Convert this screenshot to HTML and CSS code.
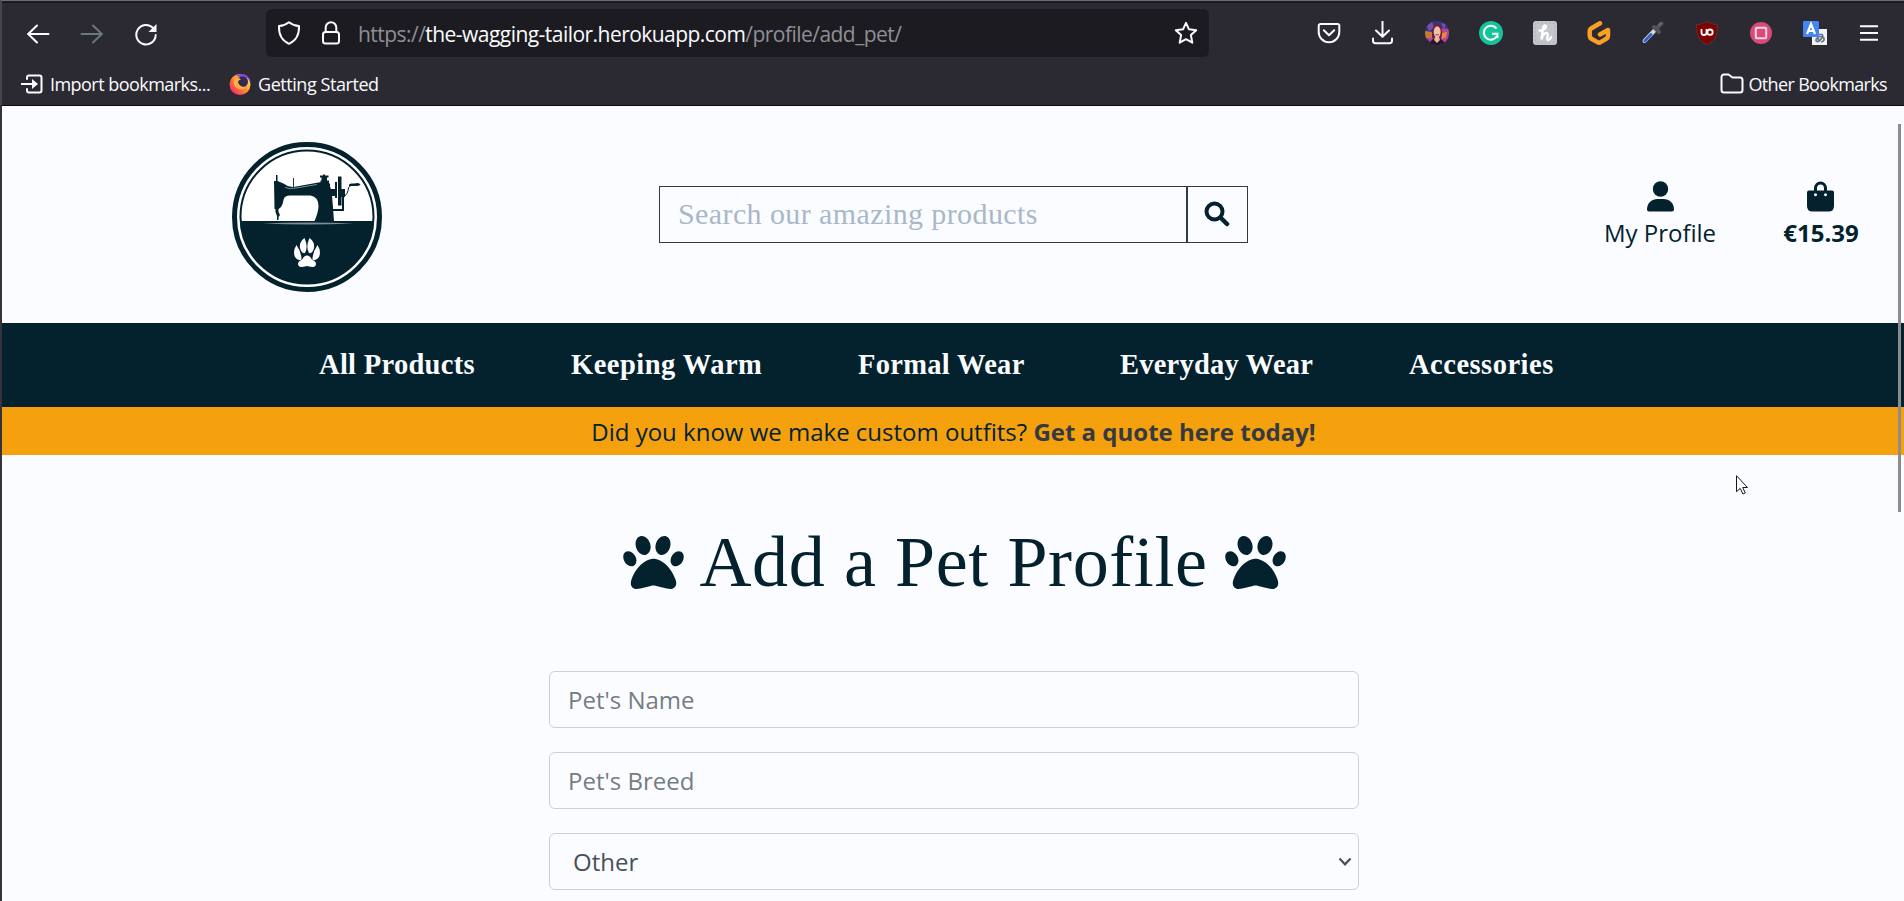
FILE: index.html
```html
<!DOCTYPE html>
<html lang="en">
<head>
<meta charset="utf-8">
<title>The Wagging Tailor</title>
<link rel="stylesheet" href="styles.css">
</head>
<body>
<svg class="defs" width="0" height="0">
  <symbol id="paw" viewBox="0 32 512 448"><path d="M226.5 92.9c14.3 42.9-.3 86.2-32.6 96.8s-70.1-15.6-84.4-58.5s.3-86.2 32.6-96.8s70.1 15.6 84.4 58.5zM100.4 198.6c18.9 32.4 14.3 70.1-10.2 84.1s-59.7-.9-78.5-33.3S-2.7 179.3 21.8 165.3s59.7 .9 78.5 33.3zM69.2 401.2C121.6 259.9 214.7 224 256 224s134.4 35.9 186.8 177.2c3.6 9.7 5.2 20.1 5.2 30.5v1.6c0 25.8-20.9 46.7-46.7 46.7c-11.5 0-22.9-1.4-34-4.2l-88-22c-15.3-3.8-31.3-3.8-46.6 0l-88 22c-11.1 2.8-22.5 4.2-34 4.2C84.9 480 64 459.1 64 433.3v-1.6c0-10.4 1.6-20.8 5.2-30.5zM421.8 282.7c-24.5-14-29.1-51.7-10.2-84.1s54-47.3 78.5-33.3s29.1 51.7 10.2 84.1s-54 47.3-78.5 33.3zM310.1 189.7c-32.3-10.6-46.9-53.9-32.6-96.8s52.1-69.1 84.4-58.5s46.9 53.9 32.6 96.8s-52.1 69.1-84.4 58.5z"/></symbol>
</svg>

<div class="browser">
  <div class="toolbar">
    <div class="nav-buttons">
      <svg class="ic" width="24" height="24" viewBox="0 0 24 24"><path d="M22.5 12H2M11 3.5L2.200 12l8.800 8.500"/></svg>
      <svg class="ic dim" width="24" height="24" viewBox="0 0 24 24"><path d="M1.500 12H22M13 3.500l8.800 8.500-8.800 8.500"/></svg>
      <svg class="ic" width="24" height="24" viewBox="0 0 24 24"><path d="M19.200 6.200A9.700 9.700 0 1 0 21.700 13"/><path d="M22.500 2v8h-8z" fill="#fbfbfe" stroke="none"/></svg>
    </div>
    <div class="urlbar">
      <svg class="ic" width="24" height="26" viewBox="0 0 24 26"><path d="M12 2.200c3 2.400 6.500 3.600 10 3.900.3 7-1.500 13.800-10 17.700C3.500 19.900 1.700 13.100 2 6.100c3.500-.3 7-1.500 10-3.900z"/></svg>
      <svg class="ic lock" width="20" height="26" viewBox="0 0 20 26"><rect x="2" y="12" width="16" height="11.500" rx="2.500"/><path d="M4.700 12V7.500a5.300 5.300 0 0 1 10.600 0V12"/></svg>
      <span class="url">https://<b>the-wagging-tailor.herokuapp.com</b>/profile/add_pet/</span>
      <svg class="ic star" width="24" height="24" viewBox="0 0 24 24"><path d="M12 1.800l3 6.500 7.200.9-5.300 4.900 1.400 7.600L12 18.200l-6.300 3.500 1.400-7.600L1.800 9.200 9 8.300z"/></svg>
    </div>
    <div class="extensions">
      <svg class="ic" width="24" height="24" viewBox="0 0 24 24"><path d="M3.500 3h17a1.800 1.800 0 0 1 1.800 1.800V11a10.300 10.300 0 0 1-20.600 0V4.800A1.800 1.800 0 0 1 3.500 3z"/><path d="M6.800 9.300L12 14.300l5.200-5"/></svg>
      <svg class="ic" width="24" height="24" viewBox="0 0 24 24"><path d="M11.500 0v15.500M5 9.500l6.500 6.300L18 9.500M2 17.500v2.300a2.400 2.400 0 0 0 2.400 2.400h14.200a2.400 2.400 0 0 0 2.400-2.400v-2.300"/></svg>
      <svg width="24" height="24" viewBox="0 0 24 24"><defs><clipPath id="av"><circle cx="12" cy="12" r="12"/></clipPath></defs><g clip-path="url(#av)"><path fill="#41307e" d="M0 0h24v24H0z"/><path fill="#c77a38" d="M0 10l7 1v7l-7-1z"/><path fill="#b7429c" d="M15 7l9 1v13l-9 3zM1 17l7 0v6z"/><path fill="#7351b5" d="M1 3l6-3 2 7-5 3zM16 2l5 1-2 5z"/><path fill="#e58a32" d="M17 12l5-1-1 5-4 2z"/><path fill="#6e2029" d="M7.500 13C6 0 18 0 17 13l-2 7H9z"/><ellipse cx="12.200" cy="11" rx="3.500" ry="5.700" fill="#eec1ab"/><path fill="#26152c" d="M4 24c2-6 5-7 8-7s7 2 8 7z"/><path fill="#e9b69e" d="M10 16h4l1 3-3 3-3-3z"/><path stroke="#a02e3c" fill="none" d="M10.500 13.500q1.700 1 3.400 0"/></g></svg>
      <svg width="24" height="24" viewBox="0 0 24 24"><circle cx="12" cy="12" r="12" fill="#15c39a"/><path d="M17.500 7.500A7 7 0 1 0 18 15" fill="none" stroke="#fff" stroke-width="2"/><path d="M13 12.800h5.500V17" fill="none" stroke="#fff" stroke-width="2"/></svg>
      <svg width="24" height="24" viewBox="0 0 24 24"><rect width="24" height="24" rx="3" fill="#c3c6ca"/><rect x="2" y="2" width="20" height="20" rx="2" fill="none" stroke="#aeb2b7" stroke-dasharray="2 2"/><path d="M6.500 9.500c4 .5 8-3 6-5-3-1-3 7-4 14 1-4.500 3-6.500 5-6.500 3 0-1 6.500 1.500 7 1.500 0 2.500-1.500 3-3" fill="none" stroke="#fff" stroke-width="2.300" stroke-linecap="round"/></svg>
      <svg width="24" height="24" viewBox="0 0 24 24"><path d="M13 2.300L4.500 7.200q-1.800 1-1.800 3v4.500q0 2 1.700 3l6 3.400q1.600 1 3.200 0l5.700-3.300q1.700-1 1.700-3V9l-8 4.500" fill="none" stroke="#fa9f25" stroke-width="4.500" stroke-linejoin="round" stroke-linecap="round"/></svg>
      <svg width="24" height="24" viewBox="0 0 24 24"><path d="M3.500 20L13.500 9.500" stroke="#d0d4dc" stroke-width="4" stroke-linecap="round"/><path d="M3.800 20L10 13.500" stroke="#3460cc" stroke-width="2.800" stroke-linecap="round"/><path d="M13 6l5 5M15 8l5.500-5.500" stroke="#505457" stroke-width="4" stroke-linecap="round"/><path d="M18 4l2-2" stroke="#777" stroke-width="1.500"/></svg>
      <svg width="24" height="24" viewBox="0 0 24 24"><path d="M12 .5C15 2.500 18.500 3.500 22.300 3.500 23 14 20 20 12 23.500 4 20 1 14 1.700 3.500 5.500 3.500 9 2.500 12 .5z" fill="#800000" stroke="#5e3038"/><path d="M6.500 8v3.500a2.500 2.500 0 0 0 5 0V8" fill="none" stroke="#fff" stroke-width="1.800"/><circle cx="15" cy="11.200" r="2.700" fill="none" stroke="#fff" stroke-width="1.800"/></svg>
      <svg width="24" height="24" viewBox="0 0 24 24"><circle cx="12" cy="12" r="11" fill="#d84a7c"/><rect x="6.800" y="6.800" width="10.400" height="10.400" rx="1" fill="none" stroke="#f5d5df" stroke-width="2"/></svg>
      <svg width="24" height="24" viewBox="0 0 24 24"><path fill="#f3f3f3" d="M9 8h15v16H9z"/><path d="M12 13.500h8M15 11c-.500 4-.2 7 1 10M20 14c-1 4-4 7-6 6.500-2.500-1 0-5 3.500-5 5 0 4.500 5 .5 5.500" fill="none" stroke="#60788a" stroke-width="1.700"/><rect width="16" height="16" rx="1" fill="#4285f4"/><path d="M4 13L8 3l4 10M5.500 10h5" fill="none" stroke="#fff" stroke-width="2.200"/></svg>
      <svg class="ic" width="24" height="24" viewBox="0 0 24 24"><path d="M3 5.200h18M3 12h18M3 18.800h18" stroke-linecap="butt"/></svg>
    </div>
  </div>
  <div class="bookmarks">
    <svg class="ic" width="22" height="20" viewBox="0 0 22 20"><path d="M6 5V3.500A2 2 0 0 1 8 1.500h10.500a2 2 0 0 1 2 2v13a2 2 0 0 1-2 2H8a2 2 0 0 1-2-2V15M0 10h13"/><path d="M11 5l6 5-6 5z" fill="#fbfbfe" stroke="none"/></svg>
    <span class="bm bm-import">Import bookmarks...</span>
    <svg class="fox" width="22" height="22" viewBox="0 0 22 22"><defs><linearGradient id="fx" x1="1" y1="0" x2="0" y2="1"><stop offset=".15" stop-color="#ffe14a"/><stop offset=".5" stop-color="#ff8a36"/><stop offset=".85" stop-color="#f43160"/></linearGradient></defs><circle cx="11" cy="11.500" r="10.500" fill="url(#fx)"/><path d="M7 3C14-2 22 3 21.500 10 20 5 16 3 12 4z" fill="#8e3df2"/><circle cx="13.500" cy="8.700" r="5.500" fill="#302a55"/><path d="M5 6q4-2 7 .5-3 .5-3 3 2 5 8.500 4.500-4 4-9 1.500Q3 12 5 6z" fill="#ffb03a"/></svg>
    <span class="bm bm-start">Getting Started</span>
    <svg class="ic folder" width="24" height="21" viewBox="0 0 24 21"><path d="M1.500 4A2.500 2.500 0 0 1 4 1.500h4.500l4 3H20A2.500 2.500 0 0 1 22.500 7v10a2.500 2.500 0 0 1-2.500 2.500H4A2.500 2.500 0 0 1 1.500 17z"/></svg>
    <span class="bm bm-other">Other Bookmarks</span>
  </div>
</div>

<div class="page">
  <header class="header">
    <svg class="logo" width="150" height="150" viewBox="0 0 150 150">
      <circle cx="75" cy="75" r="72.500" fill="#fff" stroke="#04222d" stroke-width="5"/>
      <circle cx="75" cy="75" r="66.500" fill="#fff" stroke="#04222d" stroke-width="2"/>
      <path fill="#04222d" d="M8.600 79h132.800a66.500 66.500 0 0 1-132.800 0z"/>
      <path d="M30 81.500q45-2 92 0-46 2-92 0z" fill="#7c8d93"/>
      <g fill="#04222d">
        <path d="M42 39h2v-6h1.500v6l6 2.500q5 4 10 3.500l25-4.500q8-1.500 11 2l1.500 5h5V53h-4l2 26H82.500q4-9 4-15 0-9-8-10.500H58q-6 0-6.500 4.500-1 7-5 9h-4z"/>
        <path d="M43.500 66h3v4l1.500 3-1.500 2v3h-1.500v-4l-1.500-4z"/>
        <path d="M61 36h.900v9H61zM88 33.500h3v-1h2v1h3.500v2H95v3h2v3h1v3H86.500v-3h2v-3h1v-3H88zM98 47h5v-7h2v16h-2v-2h-5zM106 34.500h3.500v29H106zM109 47h4v8h-1v14H100v-2h10V55h-1z"/>
      </g>
      <path d="M112.500 54q3.500-2 4-8.500l2-1.500" fill="none" stroke="#04222d"/>
      <path d="M117 42.500l2-1h3.500q4.500-1.500 6 1-1.500 2-6 1.500H117z" fill="#04222d"/>
      <path d="M53 45.500q5 2 11 .5l21-3.500" stroke="#a9b8bc" stroke-width=".7" fill="none"/>
      <g fill="#fff"><path d="M75 113.500q3 0 4.500 3.500l4 3q1.500 4-2 5-3 0-6.500-1-3.500 1-6.500 1-3.500-1-2-5l4-3q1.500-3.500 4.500-3.500z"/><path d="M72.500 96q-5.500 4-4.500 10 1.500 6 5 5 3.500-6-.500-15zM77.500 96q5.500 4 4.500 10-1.500 6-5 5-3.500-6 .5-15zM64.500 103q-4 6-1.500 12 3.500 5 6.500 2.500 0-7-5-14.500zM85.500 103q4 6 1.500 12-3.500 5-6.500 2.500 0-7 5-14.500z"/></g>
    </svg>
    <form class="search">
      <span class="search-text">Search our amazing products</span>
      <span class="search-btn"><svg width="26" height="26" viewBox="0 0 26 26"><circle cx="10.500" cy="10.500" r="8" fill="none" stroke="#04222d" stroke-width="4"/><path d="M16.500 16.500l6.500 6.500" stroke="#04222d" stroke-width="4.500" stroke-linecap="round"/></svg></span>
    </form>
    <a class="tool profile">
      <svg width="27" height="31" viewBox="0 0 27 31"><circle cx="13.500" cy="8" r="7.700"/><path d="M0 28.500C0 22 5 18 10.500 18h6C22 18 27 22 27 28.500a2 2 0 0 1-2 2H2a2 2 0 0 1-2-2z"/></svg>
      <span>My Profile</span>
    </a>
    <a class="tool bag">
      <svg width="27" height="31" viewBox="0 0 27 31"><path d="M8.500 12V7.500a5 5.500 0 0 1 10 0V12" fill="none" stroke="#04222d" stroke-width="3"/><path fill-rule="evenodd" d="M2 9.500h23q2 0 2 2V25q0 5.500-5.500 5.500h-16Q0 30.500 0 25V11.500q0-2 2-2zm6.500 2.700a1.500 1.500 0 1 0 .01 0zm10 0a1.500 1.500 0 1 0 .01 0z"/></svg>
      <span>€15.39</span>
    </a>
  </header>

  <nav class="menu">
    <a class="m1">All Products</a>
    <a class="m2">Keeping Warm</a>
    <a class="m3">Formal Wear</a>
    <a class="m4">Everyday Wear</a>
    <a class="m5">Accessories</a>
  </nav>

  <div class="banner"><span>Did you know we make custom outfits? <b>Get a quote here today!</b></span></div>

  <main class="content">
    <h1 class="title"><svg width="61" height="53"><use href="#paw"/></svg><span>Add a Pet Profile</span><svg width="61" height="53"><use href="#paw"/></svg></h1>
    <div class="fields">
      <div class="field">Pet's Name</div>
      <div class="field">Pet's Breed</div>
      <div class="field select"><span>Other</span><svg width="14" height="10" viewBox="0 0 14 10"><path d="M1.500 1.500L7 7.300l5.500-5.800" fill="none" stroke="#495057" stroke-width="2.200"/></svg></div>
    </div>
  </main>
</div>

<div class="scrollbar"></div>
<svg class="cursor" width="14" height="21" viewBox="0 0 14 21"><path d="M.5.700v16l3.700-3.300 2.800 5.600 2.300-1.100-2.600-5.400h4.800z" fill="#fff" stroke="#15171c"/></svg>
</body>
</html>
```
FILE: styles.css
```css
* { box-sizing: border-box; }
body {
  margin: 0;
  width: 1904px;
  height: 901px;
  overflow: hidden;
  position: relative;
  background: #fbfcff;
  font-family: "Open Sans", "Noto Sans", sans-serif;
  color: #04222d;
}
svg { display: block; flex: none; }
.defs { position: absolute; }

/* browser chrome */
.browser {
  height: 106px;
  background: #2b2a33;
  border-top: 1px solid #6d6f75;
  border-left: 2px solid #45454c;
  border-bottom: 1px solid #0c0c0d;
  box-shadow: inset 0 2px 0 #1c1b22;
  color: #fbfbfe;
}
.ic {
  fill: none;
  stroke: #fbfbfe;
  stroke-width: 2;
  stroke-linecap: round;
  stroke-linejoin: round;
}
.dim { stroke: #6d767c; }
.toolbar {
  height: 64px;
  display: flex;
  align-items: center;
  padding-left: 24px;
}
.nav-buttons { display: flex; gap: 30px; width: 240px; padding-top: 2px; }
.urlbar {
  width: 943px;
  height: 48px;
  border-radius: 6px;
  background: #1c1b22;
  display: flex;
  align-items: center;
  padding: 0 11px;
}
.lock { margin-left: 20px; }
.url {
  margin-left: 17px;
  padding-top: 2px;
  font-size: 21px;
  letter-spacing: -0.54px;
  color: #8f8f94;
  white-space: nowrap;
}
.url b { font-weight: 400; color: #fbfbfe; }
.star { margin-left: auto; }
.extensions { display: flex; gap: 30px; margin-left: 108px; }
.bookmarks {
  height: 40px;
  display: flex;
  align-items: center;
  padding: 0 17px 3px 19px;
  font-size: 18px;
}
.bm { white-space: nowrap; }
.bm-import { width: 160px; margin-left: 7px; letter-spacing: -0.54px; }
.bm-start { margin-left: 7px; letter-spacing: -0.44px; }
.fox { margin-left: 19px; }
.folder { margin-left: auto; }
.bm-other { margin-left: 5px; letter-spacing: -0.66px; }

/* page */
.page { border-left: 2px solid #33343b; height: 795px; }
.header {
  height: 217px;
  display: flex;
  align-items: center;
  padding-left: 230px;
}
.logo { margin-top: 5px; }
.search {
  width: 589px;
  height: 57px;
  margin-left: 277px;
  border: 1px solid #2f3b44;
  display: flex;
}
.search-text {
  flex: 1;
  padding-left: 18px;
  font: 30px/53px "Liberation Serif", serif;
  letter-spacing: 0.4px;
  color: #a9b8c9;
  white-space: nowrap;
}
.search-btn {
  width: 61px;
  border-left: 2px solid #2f3b44;
  display: flex;
  align-items: center;
  justify-content: center;
  padding: 0 1px 2px 0;
}
.tool {
  display: flex;
  flex-direction: column;
  align-items: center;
  padding-top: 3px;
  font-size: 24px;
  line-height: 36px;
  fill: #04222d;
  white-space: nowrap;
}
.tool span { margin-top: 3px; }
.profile { width: 114px; margin-left: 355px; }
.bag { width: 80px; margin-left: 64px; font-weight: 700; }
.bag svg { margin-right: 1px; }
.menu {
  height: 84px;
  background: #04222d;
  display: flex;
  align-items: center;
  gap: 96px;
  padding-left: 317px;
  font: bold 28.500px/84px "Liberation Serif", serif;
  color: #fbfcff;
  white-space: nowrap;
}
.m1 { width: 156px; letter-spacing: 0.3px; }
.m2 { width: 191px; letter-spacing: 0.48px; }
.m3 { width: 166px; letter-spacing: 0.3px; }
.m4 { width: 193px; letter-spacing: 0.22px; }
.m5 { width: 145px; letter-spacing: 0.5px; }
.banner {
  height: 48px;
  padding-left: 1px;
  background: #f4a10d;
  font-size: 24px;
  line-height: 50px;
  text-align: center;
}
.banner b { color: #343a40; }
.content { padding-left: 2px; }
.title {
  margin: 60px 0 0;
  height: 94px;
  display: flex;
  align-items: center;
  justify-content: center;
  font: 72px/94px "Liberation Serif", serif;
  letter-spacing: 0.6px;
  fill: #04222d;
}
.title span { width: 507px; margin: 0 18px 0 16px; white-space: nowrap; }
.fields {
  width: 810px;
  margin: 62px auto 0;
  display: flex;
  flex-direction: column;
  gap: 24px;
}
.field {
  height: 57px;
  border: 1px solid #ced0d3;
  border-radius: 6px;
  padding: 0 7px 0 18px;
  font-size: 24px;
  line-height: 56px;
  color: #757c83;
}
.select {
  display: flex;
  align-items: center;
  justify-content: space-between;
  padding: 0 6px 0 23px;
  color: #495057;
}
.scrollbar {
  position: absolute;
  left: 1898px;
  top: 124px;
  width: 3px;
  height: 388px;
  background: #8b8b90;
}
.cursor { position: absolute; left: 1736px; top: 475px; }
```
